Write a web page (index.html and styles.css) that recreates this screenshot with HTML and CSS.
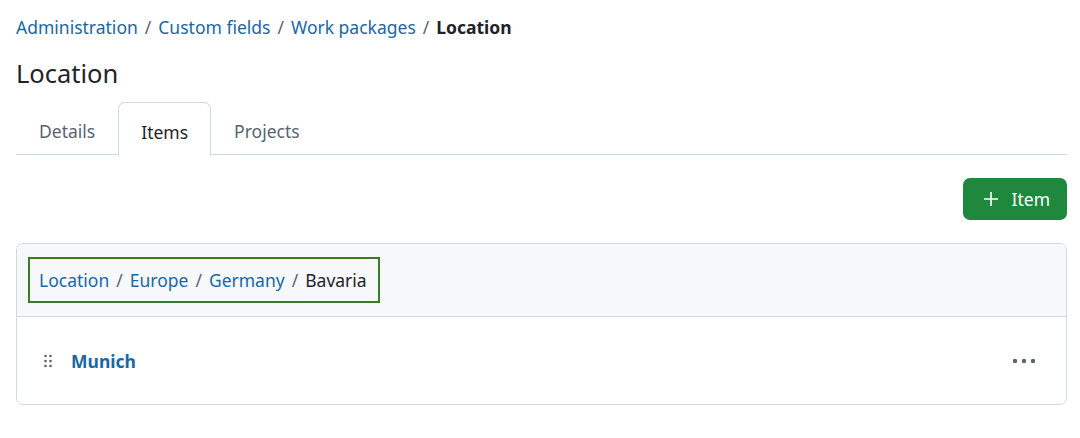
FILE: index.html
```html
<!DOCTYPE html>
<html>
<head>
<meta charset="utf-8">
<link rel="stylesheet" href="styles.css">
</head>
<body>
<div class="page">
  <nav class="crumbs">
    <a href="#">Administration</a><span class="sep">/</span><a href="#">Custom fields</a><span class="sep">/</span><a href="#">Work packages</a><span class="sep">/</span><strong>Location</strong>
  </nav>
  <h1 class="title">Location</h1>
  <div class="tabs">
    <a class="tab" href="#">Details</a>
    <a class="tab active" href="#">Items</a>
    <a class="tab" href="#">Projects</a>
  </div>
  <div class="actions">
    <button class="btn-add">
      <svg width="16" height="16" viewBox="0 0 16 16"><path d="M8 1v14M1 8h14" stroke="#fff" stroke-width="1.6" fill="none"/></svg>
      <span>Item</span>
    </button>
  </div>
  <div class="box">
    <div class="box-head">
      <div class="hier">
        <a href="#">Location</a><span class="sep">/</span><a href="#">Europe</a><span class="sep">/</span><a href="#">Germany</a><span class="sep">/</span><span class="cur">Bavaria</span>
      </div>
    </div>
    <div class="row">
      <svg class="drag" width="8" height="14" viewBox="0 0 8 14"><circle cx="1.5" cy="2" r="1.3"/><circle cx="6.5" cy="2" r="1.3"/><circle cx="1.5" cy="7" r="1.3"/><circle cx="6.5" cy="7" r="1.3"/><circle cx="1.5" cy="12" r="1.3"/><circle cx="6.5" cy="12" r="1.3"/></svg>
      <a class="item" href="#">Munich</a>
      <svg class="more" width="24" height="6" viewBox="0 0 24 6"><circle cx="3" cy="3" r="2.2"/><circle cx="12" cy="3" r="2.2"/><circle cx="21" cy="3" r="2.2"/></svg>
    </div>
  </div>
</div>
</body>
</html>
```
FILE: styles.css
```css
html, body { margin: 0; padding: 0; background: #fff; }
body { font-family: "Noto Sans", "Open Sans", sans-serif; color: #1f2328; }
a { text-decoration: none; color: #1a67a3; }
.page { padding: 14px 13px 0 16px; }
.crumbs { font-size: 17.5px; line-height: 26px; height: 26px; display: flex; align-items: center; }
.crumbs .sep { color: #59636e; margin: 0 7px; }
.crumbs strong { font-weight: 700; color: #1f2328; }
.title { margin: 18px 0 0 0; font-size: 25.5px; font-weight: 400; line-height: 30px; color: #1f2328; }
.tabs { margin-top: 14px; display: flex; border-bottom: 1px solid #d1d9e0; height: 52px; padding-left: 0; }
.tab { font-size: 17.5px; color: #59636e; padding: 0 22px; display: flex; align-items: center; padding-top: 6px; height: 46px; margin-bottom: -1px; border: 1px solid transparent; border-bottom: none; border-radius: 7px 7px 0 0; line-height: 1; }
.tab.active { color: #1f2328; background: #fff; border-color: #d1d9e0; height: 47px; }
.actions { display: flex; justify-content: flex-end; margin-top: 23px; }
.btn-add { display: flex; align-items: center; gap: 13px; height: 42px; padding: 0 17px 0 20px; background: #1f883d; color: #fff; border: none; border-radius: 7px; font-family: inherit; font-size: 17.5px; }
.box { margin-top: 23px; border: 1px solid #d1d9e0; border-radius: 7px; overflow: hidden; }
.box-head { background: #f6f8fa; height: 72px; border-bottom: 1px solid #d1d9e0; display: flex; align-items: center; padding-left: 11px; }
.hier { border: 2px solid #3a7d25; height: 42px; display: flex; align-items: center; padding: 0 11px 0 9px; font-size: 17.5px; }
.hier .sep { color: #59636e; margin: 0 7px; }
.hier .cur { color: #1f2328; }
.row { height: 87px; display: flex; align-items: center; padding: 0 30px 0 27px; }
.drag { fill: #59636e; }
.item { font-weight: 700; font-size: 17.5px; margin-left: 19px; flex: 1; }
.more { fill: #59636e; }
```
